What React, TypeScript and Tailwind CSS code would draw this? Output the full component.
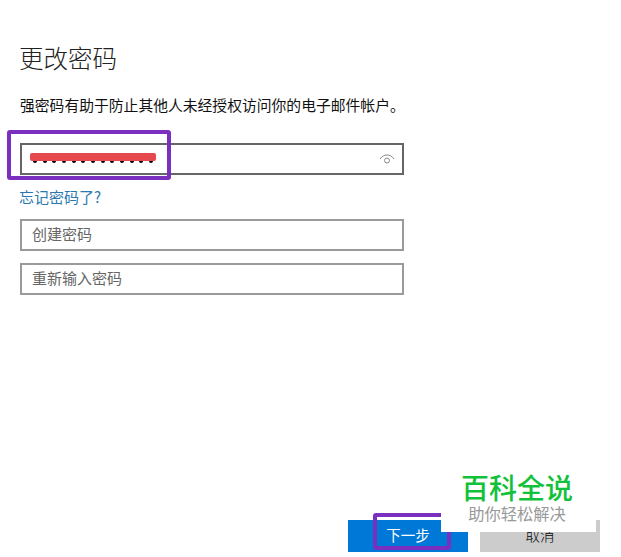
import React from "react";

const font = { fontFamily: '"Noto Sans CJK SC", "Liberation Sans", sans-serif' };

const App = () => {
  return (
    <div className="relative flex h-[557px] w-[621px] flex-col overflow-hidden bg-white pl-5 pr-[21px]" style={font}>
      <h1 className="mt-[41px] -ml-px h-[34px] text-[24.500px] leading-[34px] font-light text-[#222]">更改密码</h1>
      <p className="mt-[18px] h-[24px] text-[14.800px] leading-[24px] text-[#111]">
        强密码有助于防止其他人未经授权访问你的电子邮件帐户。
      </p>

      {/* campo de contraseña actual */}
      <div className="relative mt-[26px] flex h-8 w-[384px] items-center justify-between border-2 border-[#666] pr-[7px] pl-2">
        <div className="relative -mt-px h-[12px] w-[126px]">
          <div className="absolute top-[6px] flex w-full justify-between px-[3px]">
            {Array.from({ length: 13 }).map((_, i) => (
              <span key={i} className="h-[4px] w-[4px] rounded-full bg-black" />
            ))}
          </div>
          <div className="absolute inset-x-0 top-0 h-[8px] rounded-[2px] bg-[#e5484d]" />
        </div>
        <svg width="16" height="11" viewBox="0 0 16 11" fill="none" stroke="#888" strokeWidth="1">
          <path d="M1 5C3 2 5.500 1 8 1s5 1 7 4" />
          <circle cx="8" cy="6.500" r="2.500" />
        </svg>
      </div>

      <a className="mt-[11px] -ml-px h-[22px] text-[15px] leading-[22px] text-[#2a78b0]">忘记密码了?</a>

      <div className="mt-[11px] flex h-8 w-[384px] items-center border-2 border-[#9a9a9a] pb-[2px] pl-[10px] text-[15px] text-[#666]">
        创建密码
      </div>
      <div className="mt-3 flex h-8 w-[384px] items-center border-2 border-[#9a9a9a] pb-[2px] pl-[10px] text-[15px] text-[#666]">
        重新输入密码
      </div>

      {/* botones */}
      <div className="mt-auto mb-[5px] flex justify-end gap-3">
        <button className="flex h-8 w-[120px] items-center justify-center bg-[#0078d7] pb-[2px] text-[14.500px] text-white">
          下一步
        </button>
        <button className="flex h-8 w-[120px] items-center justify-center bg-[#cccccc] pb-[2px] text-[14.500px] font-light text-black">
          取消
        </button>
      </div>

      {/* anotaciones moradas */}
      <div className="absolute top-[130px] left-[7px] h-[50px] w-[164px] rounded-[3px] border-4 border-[#7b2fbe]" />
      <div className="absolute top-[513px] left-[373px] h-[37px] w-[78px] rounded-[3px] border-4 border-[#7b2fbe]" />

      {/* marca de agua */}
      <div className="absolute top-[465px] left-[441px] flex h-[67px] w-[155px] flex-col items-center bg-white">
        <div className="mt-[7px] -ml-[3px] text-[28px] leading-[30px] font-medium text-[#12c13a]">百科全说</div>
        <div className="-ml-[3px] text-[16.300px] leading-[22px] text-[#999]">助你轻松解决</div>
      </div>
    </div>
  );
};

export default App;
